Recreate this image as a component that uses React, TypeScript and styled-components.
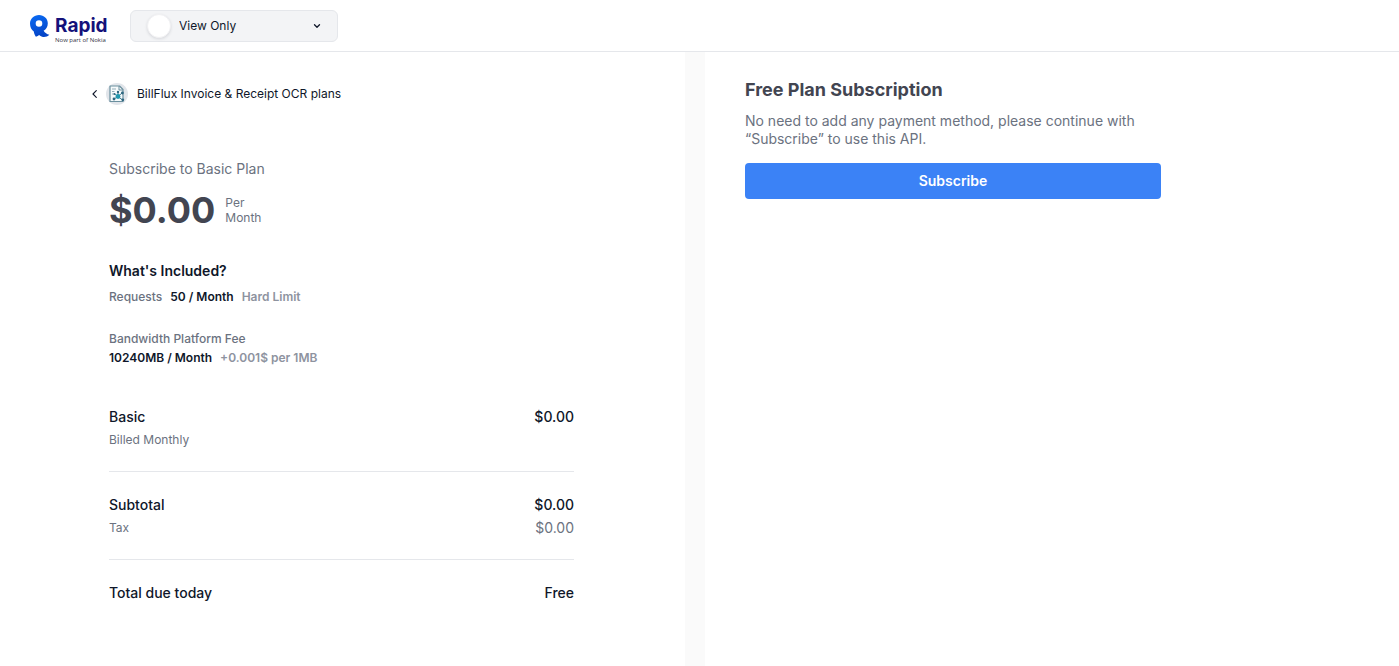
import React from "react";
import styled, { createGlobalStyle } from "styled-components";

const GlobalStyle = createGlobalStyle`
  *, *::before, *::after { box-sizing: border-box; }
  html, body, #root { height: 100%; }
  body {
    margin: 0;
    background: #ffffff;
    color: #0f172a;
    font-family: Inter, "Liberation Sans", sans-serif;
    font-size: 14px;
    line-height: 20px;
    -webkit-font-smoothing: antialiased;
  }
  h1, h2, p, dl, dt, dd { margin: 0; font: inherit; }
`;

const Page = styled.div`
  display: flex;
  flex-direction: column;
  min-height: 100%;
`;

const Header = styled.header`
  display: flex;
  align-items: center;
  gap: 24px;
  height: 52px;
  padding: 0 30px;
  border-bottom: 1px solid #e5e7eb;
`;

const Logo = styled.a`
  display: flex;
  align-items: flex-start;
  gap: 5px;
  width: 76px;
  padding-top: 6px;
  color: #14117a;
  text-decoration: none;

  svg { flex: none; }
`;

const LogoText = styled.span`
  display: flex;
  flex-direction: column;
`;

const LogoName = styled.span`
  font-family: Inter, sans-serif;
  font-size: 19px;
  font-weight: 700;
  line-height: 22px;
`;

const LogoTagline = styled.span`
  color: #33343f;
  font-family: "Open Sans", sans-serif;
  font-size: 6px;
  font-weight: 500;
  line-height: 6px;
  white-space: nowrap;
`;

const Workspace = styled.label`
  display: flex;
  align-items: center;
  gap: 8px;
  width: 208px;
  height: 32px;
  padding: 0 16px;
  border: 1px solid #e5e7eb;
  border-radius: 6px;
  background: #f3f4f6;
`;

const Avatar = styled.span`
  flex: none;
  width: 24px;
  height: 24px;
  border: 1px solid #f1f1f3;
  border-radius: 50%;
  background: #ffffff;
  box-shadow: 0 1px 3px rgba(17, 24, 39, 0.12);
`;

const WorkspaceSelect = styled.select`
  flex: 1;
  min-width: 0;
  padding: 0;
  border: 0;
  appearance: none;
  background: transparent;
  color: #0f172a;
  font-family: inherit;
  font-size: 12px;
  line-height: 16px;
`;

const Columns = styled.main`
  display: grid;
  flex: 1;
  grid-template-columns: 76fr 77fr;
  column-gap: 20px;
  background: #fafafa;
`;

const Summary = styled.section`
  padding: 30px 40px 40px 92px;
  background: #ffffff;
`;

const Checkout = styled.section`
  padding: 26px 40px;
  background: #ffffff;
`;

const BackLink = styled.a`
  display: flex;
  align-items: center;
  gap: 9px;
  height: 24px;
  color: #0f172a;
  font-size: 12px;
  line-height: 16px;
  text-decoration: none;
`;

const Plan = styled.div`
  max-width: 482px;
  padding: 53px 0 0 17px;
`;

const PlanName = styled.h1`
  color: #6b7280;
`;

const PriceRow = styled.p`
  display: flex;
  align-items: center;
  gap: 10px;
  margin-top: 7px;
`;

const Price = styled.span`
  color: #424551;
  font-size: 36px;
  font-weight: 700;
  line-height: 48px;
`;

const Period = styled.span`
  width: 40px;
  color: #6b7280;
  font-size: 12px;
  line-height: 15px;
`;

const SectionTitle = styled.h2`
  margin-top: 27px;
  font-weight: 600;
`;

const Quota = styled.div<{ $stacked?: boolean }>`
  display: flex;
  flex-wrap: wrap;
  column-gap: 8px;
  margin-top: ${(p) => (p.$stacked ? 23 : 6)}px;
  font-size: 12px;
  font-weight: 600;
  line-height: 19px;

  dt { flex-basis: ${(p) => (p.$stacked ? "100%" : "auto")}; }
`;

const QuotaLabel = styled.dt`
  color: #6b7280;
  font-weight: 500;
`;

const QuotaLimit = styled.dd`
  color: #0f172a;
`;

const QuotaNote = styled.dd`
  color: #8e939f;
`;

const Charges = styled.dl`
  margin-top: 17px;
`;

const ChargeGroup = styled.div`
  padding: 23px 0 18px;
  border-bottom: 1px solid #e5e7eb;

  &:last-child { border-bottom: 0; }
`;

const Charge = styled.div<{ $minor?: boolean }>`
  display: flex;
  justify-content: space-between;
  color: ${(p) => (p.$minor ? "#6b7280" : "#0f172a")};
  font-weight: ${(p) => (p.$minor ? 400 : 500)};
  line-height: ${(p) => (p.$minor ? 26 : 20)}px;

  dt { font-size: ${(p) => (p.$minor ? 12 : 14)}px; }
`;

const CheckoutTitle = styled.h2`
  color: #424551;
  font-size: 18px;
  font-weight: 700;
  line-height: 24px;
`;

const CheckoutText = styled.p`
  max-width: 416px;
  margin-top: 10px;
  color: #6b7280;
  line-height: 18px;
`;

const SubscribeButton = styled.button`
  width: 100%;
  max-width: 416px;
  height: 36px;
  margin-top: 15px;
  border: 0;
  border-radius: 4px;
  background: #3b82f6;
  color: #ffffff;
  font: inherit;
  font-weight: 600;
  cursor: pointer;
`;

const LogoMark = () => (
  <svg width="20" height="23" viewBox="0 0 20 23" aria-hidden="true">
    <defs>
      <linearGradient id="markFill" x1="0" y1="0" x2="0.3" y2="1">
        <stop offset="0" stopColor="#0a6cf5" />
        <stop offset="1" stopColor="#0546c8" />
      </linearGradient>
    </defs>
    <path
      fill="url(#markFill)"
      fillRule="evenodd"
      d="M9 0C14 0 17.800 3.600 17.800 8.300c0 3.400-1.600 6-4.200 7.400 1.400 2.200 3.200 3.400 5.700 4-1.800 1.900-4.600 2.700-7.200 2-1.200-.3-2.100-.8-3-1.600-.8.9-1.900 1.500-3.200 1.700C4.700 20.200 4.100 18.500 3.800 16.500 1.400 14.800 0 12 0 8.500 0 3.700 4 0 9 0zM9 5.200a3.300 3.300 0 1 0 0 6.600a3.300 3.300 0 1 0 0-6.600z"
    />
  </svg>
);

const ChevronDown = () => (
  <svg width="8" height="8" viewBox="0 0 8 8" fill="none" stroke="#0f172a" strokeWidth="1.300" strokeLinecap="round" strokeLinejoin="round" aria-hidden="true">
    <path d="M1.500 2.800 4 5.200l2.500-2.400" />
  </svg>
);

const ChevronLeft = () => (
  <svg width="5" height="8" viewBox="0 0 5 8" fill="none" stroke="#0f172a" strokeWidth="1.100" strokeLinecap="round" strokeLinejoin="round" aria-hidden="true">
    <path d="M4.300.7 1 4l3.300 3.300" />
  </svg>
);

const ApiIcon = () => (
  <svg width="22" height="22" viewBox="0 0 22 22" fill="none" aria-hidden="true">
    <circle cx="11" cy="11" r="11" fill="#e1e5ea" />
    <path d="M4 3h9.500l3.500 3.500V18.500H4z" fill="#f6fafb" stroke="#6b8f9e" strokeWidth="1.200" strokeLinejoin="round" />
    <path d="M13 3v4h4" stroke="#6b8f9e" />
    <path d="M6 6h4M6 8.500h2.500M6 11h2" stroke="#93adb8" />
    <path d="M12 13.500 8 16M12 13.500l4.500 3.500M12 13.500l4-3.500M12 13.500 8.500 11M12 13.500V9" stroke="#3f7890" />
    <circle cx="12" cy="13.500" r="2.400" fill="#2298ae" />
    <g fill="#2d6780">
      <circle cx="8" cy="16" r="1.400" />
      <circle cx="16.800" cy="16.800" r="1.400" />
      <circle cx="16.400" cy="10" r="1.400" />
      <circle cx="8.500" cy="11" r="1" />
      <circle cx="12" cy="9" r="1.200" />
    </g>
  </svg>
);

export default function App() {
  return (
    <Page>
      <GlobalStyle />
      <Header>
        <Logo href="#home">
          <LogoMark />
          <LogoText>
            <LogoName>Rapid</LogoName>
            <LogoTagline>Now part of Nokia</LogoTagline>
          </LogoText>
        </Logo>
        <Workspace>
          <Avatar />
          <WorkspaceSelect aria-label="Workspace">
            <option>View Only</option>
          </WorkspaceSelect>
          <ChevronDown />
        </Workspace>
      </Header>
      <Columns>
        <Summary>
          <BackLink href="#plans">
            <ChevronLeft />
            <ApiIcon />
            BillFlux Invoice &amp; Receipt OCR plans
          </BackLink>
          <Plan>
            <PlanName>Subscribe to Basic Plan</PlanName>
            <PriceRow>
              <Price>$0.00</Price>
              <Period>Per Month</Period>
            </PriceRow>
            <SectionTitle>What's Included?</SectionTitle>
            <dl>
              <Quota>
                <QuotaLabel>Requests</QuotaLabel>
                <QuotaLimit>50 / Month</QuotaLimit>
                <QuotaNote>Hard Limit</QuotaNote>
              </Quota>
              <Quota $stacked>
                <QuotaLabel>Bandwidth Platform Fee</QuotaLabel>
                <QuotaLimit>10240MB / Month</QuotaLimit>
                <QuotaNote>+0.001$ per 1MB</QuotaNote>
              </Quota>
            </dl>
            <Charges>
              <ChargeGroup>
                <Charge>
                  <dt>Basic</dt>
                  <dd>$0.00</dd>
                </Charge>
                <Charge $minor>
                  <dt>Billed Monthly</dt>
                </Charge>
              </ChargeGroup>
              <ChargeGroup>
                <Charge>
                  <dt>Subtotal</dt>
                  <dd>$0.00</dd>
                </Charge>
                <Charge $minor>
                  <dt>Tax</dt>
                  <dd>$0.00</dd>
                </Charge>
              </ChargeGroup>
              <ChargeGroup>
                <Charge>
                  <dt>Total due today</dt>
                  <dd>Free</dd>
                </Charge>
              </ChargeGroup>
            </Charges>
          </Plan>
        </Summary>
        <Checkout>
          <CheckoutTitle>Free Plan Subscription</CheckoutTitle>
          <CheckoutText>
            No need to add any payment method, please continue with “Subscribe” to use this API.
          </CheckoutText>
          <SubscribeButton type="button">Subscribe</SubscribeButton>
        </Checkout>
      </Columns>
    </Page>
  );
}
